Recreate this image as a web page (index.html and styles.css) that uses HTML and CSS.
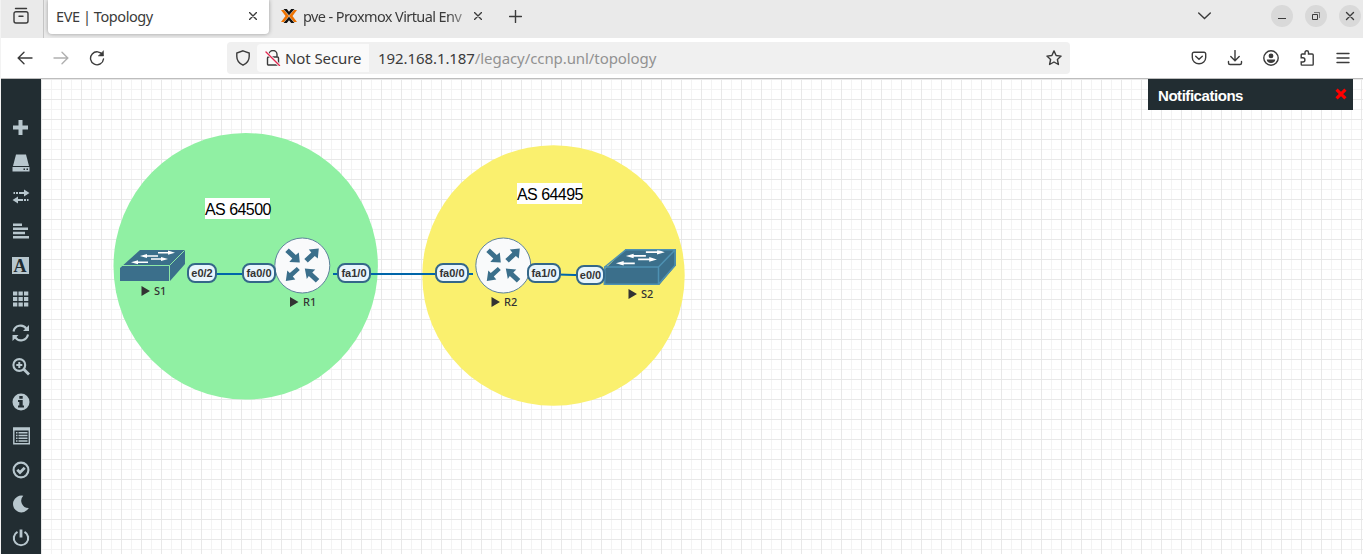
FILE: index.html
```html
<!DOCTYPE html>
<html lang="en">
<head>
<meta charset="utf-8">
<title>EVE | Topology</title>
<link rel="stylesheet" href="styles.css">
</head>
<body>
<div class="window">
  <header class="tabbar">
    <div class="recent"><svg class="ico" width="18" height="18" viewBox="0 0 18 18"><path d="M3.5 1.5h11M4 4.700h10a2 2 0 0 1 2 2v7.300a2 2 0 0 1-2 2h-10a2 2 0 0 1-2-2v-7.300a2 2 0 0 1 2-2zM7 9.300h4"/></svg></div>
    <div class="tab active"><span class="tab-title t-eve">EVE | Topology</span><svg class="ico" width="8" height="8" viewBox="0 0 8 8"><path d="M.5.5l7 7M7.500.5l-7 7"/></svg></div>
    <div class="tab second">
      <svg width="16" height="14" viewBox="0 0 16 14"><path d="M0 1h3l5 6-5 6H0l4.500-6zM16 1h-3L8 7l5 6h3l-4.500-6z" fill="#ee7200"/><path d="M2.500 0h3.300L8 2.700 10.200 0h3.300L8 6.200zM2.500 14h3.300L8 11.300l2.200 2.700h3.300L8 7.800z" fill="#111"/></svg>
      <span class="tab-title t-pve">pve - Proxmox Virtual Env</span><svg class="ico" width="8" height="8" viewBox="0 0 8 8"><path d="M.5.5l7 7M7.500.5l-7 7"/></svg>
    </div>
    <svg class="ico plus" width="13" height="13" viewBox="0 0 13 13"><path d="M6.500.5v12M.5 6.500h12"/></svg>
    <svg class="ico chevron" width="13" height="8" viewBox="0 0 13 8"><path d="M.7 1l5.800 5.500L12.300 1"/></svg>
    <div class="winbtns">
      <span class="winbtn"><svg class="ico thin" width="22" height="22" viewBox="0 0 22 22"><path d="M7 13.500h8"/></svg></span>
      <span class="winbtn"><svg class="ico thin" width="22" height="22" viewBox="0 0 22 22"><path d="M7.500 9.500h5v5h-5z"/><path d="M9 7.500h5.500V13" opacity=".6"/></svg></span>
      <span class="winbtn"><svg class="ico" width="22" height="22" viewBox="0 0 22 22"><path d="M7.500 7.500l7 7M14.500 7.500l-7 7"/></svg></span>
    </div>
  </header>

  <div class="toolbar">
    <svg class="ico back" width="16" height="14" viewBox="0 0 16 14"><path d="M15 7H1.500M7 1.200L1.200 7 7 12.800"/></svg>
    <svg class="ico fwd" width="16" height="14" viewBox="0 0 16 14"><path d="M1 7h13.500M9 1.200L14.800 7 9 12.800"/></svg>
    <svg class="ico reload" width="16" height="16" viewBox="0 0 16 16"><path d="M13.700 5.100A6.500 6.500 0 1 0 14.500 9"/><path d="M14.500 1v5H9.500z" fill="#3b3b3b" stroke-width=".5"/></svg>
    <div class="urlbar">
      <svg class="ico shield" width="16" height="16" viewBox="0 0 16 16"><path d="M8 .8L14.200 3v3.500c0 4-2.200 6.800-6.200 8.700C4 13.300 1.800 10.500 1.800 6.500V3z"/></svg>
      <div class="identity"><svg class="ico" width="16" height="16" viewBox="0 0 16 16"><path d="M4 7V4.500a4 4 0 0 1 8 0V7M3.500 7h9a1 1 0 0 1 1 1v6a1 1 0 0 1-1 1h-9a1 1 0 0 1-1-1V8a1 1 0 0 1 1-1z"/><path d="M1 2l13.500 13.500" stroke="#fafafa" stroke-width="3"/><path d="M1 2l13.500 13.500" stroke="#e22850" stroke-width="1.400"/></svg><span class="t-sec">Not Secure</span></div>
      <span class="url">192.168.1.187<span class="path">/legacy/ccnp.unl/topology</span></span>
      <svg class="ico star" width="16" height="16" viewBox="0 0 16 16"><path d="M8 .9l2.100 4.600 5 .6-3.700 3.400 1 5L8 12l-4.400 2.500 1-5L.9 6.100l5-.6z" stroke-linejoin="round"/></svg>
    </div>
    <div class="actions">
      <svg class="ico" width="16" height="16" viewBox="0 0 16 16"><path d="M3 2.200h10a1.700 1.700 0 0 1 1.700 1.700V7.500a6.700 6.300 0 0 1-13.400 0V3.900A1.700 1.700 0 0 1 3 2.200zM4.700 6.200L8 9.300l3.300-3.100"/></svg>
      <svg class="ico" width="16" height="16" viewBox="0 0 16 16"><path d="M8 .5v10M3.800 6.500L8 10.700l4.200-4.200M1.500 11.500v1.500a1.500 1.500 0 0 0 1.500 1.500h10a1.500 1.500 0 0 0 1.500-1.500v-1.500"/></svg>
      <svg class="ico" width="16" height="16" viewBox="0 0 16 16"><circle cx="8" cy="8" r="7.200"/><circle cx="8" cy="5.900" r="2.400" fill="#3b3b3b" stroke="none"/><path d="M3.800 9.500h8.400c0 2.200-1.700 3.600-4.200 3.600S3.800 11.700 3.800 9.500z" fill="#3b3b3b" stroke="none"/></svg>
      <svg class="ico" width="16" height="16" viewBox="0 0 16 16"><path d="M2.200 7.800V5a1 1 0 0 1 1-1H6V2.500a1.700 1.700 0 0 1 3.500 0V4h3.700a1 1 0 0 1 1 1v9.300a.8.800 0 0 1-.8.8H3a.8.800 0 0 1-.8-.8V12h1.600a2.100 2.100 0 0 0 0-4.200z"/></svg>
      <svg class="ico" width="16" height="16" viewBox="0 0 16 16"><path d="M2 3.500h12M2 8h12M2 12.500h12"/></svg>
    </div>
  </div>

  <div class="page">
    <nav class="sidebar">
      <span class="item"><svg viewBox="0 0 18 18"><path d="M6.500 1h4v5.500H16v4h-5.500V16h-4v-5.500H1v-4h5.500z"/></svg></span>
      <span class="item"><svg viewBox="0 0 18 18"><path d="M4 .5h10L17 12H1z"/><path d="M.5 13h17v4.500H.5z"/><path d="M11.500 14.500h1.500v1.500h-1.500zM14.500 14.500H16v1.500h-1.500z" class="cut"/></svg></span>
      <span class="item"><svg viewBox="0 0 18 18"><path d="M1.500 4H3v2H1.500zM4 4h2v2H4zM7 4h5V1.500L17.500 5 12 8.500V6H7zM16.500 11H15v2h1.500zM14 11h-2v2h2zM11 11H6V8.500L.5 12 6 15.500V13h5z"/></svg></span>
      <span class="item"><svg viewBox="0 0 18 18"><path d="M1 1.500h9V4H1zM1 5.500h15V8H1zM1 9.700h12v2.500H1zM1 14h16v2.500H1z"/></svg></span>
      <span class="item"><span class="letter">A</span></span>
      <span class="item"><svg viewBox="0 0 18 18"><path d="M1 1.500h4.300v4H1zm5.500 0h4.300v4H6.500zm5.500 0h4.300v4H12zM1 7h4.300v4H1zm5.500 0h4.300v4H6.500zM12 7h4.300v4H12zM1 12.500h4.300v4H1zm5.500 0h4.300v4H6.500zm5.500 0h4.300v4H12z"/></svg></span>
      <span class="item"><svg viewBox="0 0 18 18"><path d="M1.500 7.500a7.200 7.200 0 0 1 13-2.700M16 10.500a7.200 7.200 0 0 1-13 2.700" class="line"/><path d="M17 1v6H11zM.5 17v-6h6z"/></svg></span>
      <span class="item"><svg viewBox="0 0 18 18"><circle cx="7.300" cy="7" r="5.900" class="line"/><path d="M11.500 11l5.500 5.500" class="line heavy"/><path d="M6.300 4h2v2h2v2h-2v2h-2V8h-2V6h2z"/></svg></span>
      <span class="item"><svg viewBox="0 0 18 18"><circle cx="9" cy="9" r="8.500"/><path d="M7.300 3h3.400v2.800H7.300zM6 7h4.700v5.500H12v2H6v-2h1.300V9H6z" class="cut"/></svg></span>
      <span class="item"><svg viewBox="0 0 18 18"><path d="M1.800 1.300h15.500v15.400H1.800z" class="line slim"/><path d="M1 .6h17v3H1zM4 5h1.500v1.500H4zM6.500 5h9v1.500h-9zM4 7.800h1.500v1.400H4zM6.500 7.800h9v1.400h-9zM4 10.500h1.500V12H4zM6.500 10.500h9V12h-9zM4 13.200h1.500v1.500H4zM6.500 13.200h9v1.500h-9z"/></svg></span>
      <span class="item"><svg viewBox="0 0 18 18"><circle cx="9" cy="9" r="7.400" class="line"/><path d="M5.300 8.800L8 11.500l4.700-4.700" class="line heavy"/></svg></span>
      <span class="item"><svg viewBox="0 0 18 18"><path d="M11.300.8A7.200 7.200 0 0 0 16.800 13 8.400 8.400 0 1 1 11.300.8z"/></svg></span>
      <span class="item"><svg viewBox="0 0 18 18"><path d="M5.500 2.800a7.200 7.200 0 1 0 7 0" class="line"/><path d="M9 .5V8.500" class="line heavy"/></svg></span>
    </nav>

    <main class="canvas">
      <svg class="drawing" width="1322" height="475" viewBox="41 79 1322 475">
        <defs>
          <g id="router"><circle r="27.500" fill="#f9fafb" stroke="#5d829b"/>
            <g fill="#3b6f8b"><path d="M-17-13.500L-13.500-17-6.500-10.500-3.500-13-2.500-3-13-3.500-10-7z"/><path d="M2-6.500L9-13 6.500-16 16.500-17 15.500-7 12.500-9.500 5.500-3z"/><path d="M-2.500 4.500L-9.500 11-7 14-16.500 15.500-15 5-12.500 7.500-5.500 1.500z"/><path d="M17 13.500L13.500 17 6.500 10.500 4.500 13.500 2.500 3 13 4 10 7z"/></g></g>
          <g id="switch"><path d="M0 18L20 0H65V14L50 31H0z" fill="#3b6f8b"/>
            <g fill="none" stroke="#fff" stroke-width="1.500"><path d="M38 2.700h12M25 6h13M31 9h13M15 12.300h13"/></g>
            <path d="M48 .5l7 2.200-7 2zM27 4l-7 2 7 2zM41 7l7 2-7 2zM18 10.300l-7 2 7 2z" fill="#fff"/></g>
        </defs>
        <ellipse cx="245.700" cy="266.300" rx="132.200" ry="133.300" fill="#90f0a3"/>
        <ellipse cx="553.500" cy="275.500" rx="131.200" ry="130.300" fill="#faf06e"/>
        <g stroke="#0066aa" stroke-width="2"><path d="M200 274h62M333 274h140M541 274l50 1.500"/></g>
        <use href="#router" x="302.300" y="265.500"/>
        <use href="#router" x="503.300" y="265.500"/>
        <use href="#switch" x="120" y="250"/>
        <path d="M120.500 265.500H169.500L184.500 250.500M169.500 265.500V281" fill="none" stroke="#8de7a5" stroke-width="1"/>
        <g transform="translate(603.700 249) scale(1.110 1.160)"><use href="#switch"/></g>
        <path d="M604.700 267L626 249.700H675V265.500L658.500 284.300H604.700V267H658.500L675 250M658.500 267v17" fill="none" stroke="#4e91b2" stroke-width="1.500"/>
        <g fill="#333"><path d="M141.500 286l8.500 5-8.500 5zM290 297l8.500 5-8.500 5zM491.500 297l8.500 5-8.500 5zM628.500 289l8.500 5-8.500 5z"/></g>
      </svg>
      <span class="as as-left">AS 64500</span>
      <span class="as as-right">AS 64495</span>
      <span class="port p1">e0/2</span>
      <span class="port wide p2">fa0/0</span>
      <span class="port wide p3">fa1/0</span>
      <span class="port wide p4">fa0/0</span>
      <span class="port wide p5">fa1/0</span>
      <span class="port p6">e0/0</span>
      <span class="name n1">S1</span>
      <span class="name n2">R1</span>
      <span class="name n3">R2</span>
      <span class="name n4">S2</span>
      <div class="notice"><span>Notifications</span><svg width="12" height="12" viewBox="0 0 10 10"><path d="M1.300 1.300l7.400 7.400M8.700 1.300L1.300 8.700" stroke="#f00" stroke-width="2.600"/></svg></div>
    </main>
  </div>
</div>
</body>
</html>
```
FILE: styles.css
```css
* { box-sizing: border-box; }
body { margin: 0; overflow: hidden; font-family: "Noto Sans", "Open Sans", sans-serif; color: #3b3b3b; }
svg { display: block; flex: none; }
.window { width: 1363px; height: 554px; display: flex; flex-direction: column; border-left: 1px solid #f3f3f3; }
.ico { fill: none; stroke: #3b3b3b; stroke-width: 1.4; stroke-linecap: round; }
.thin { stroke-width: 1; stroke-linecap: butt; }

.tabbar { height: 38px; flex: none; background: #eaeaea; display: flex; align-items: flex-start; }
.recent { width: 43px; height: 38px; border-right: 1px solid #c6c6c6; padding: 7px 0 0 11px; }
.tab { display: flex; align-items: center; height: 34px; font-size: 14.5px; white-space: nowrap; }
.active { width: 221px; margin-left: 4px; padding: 0 12px 2px 8px; background: #fff; border-radius: 0 0 4px 4px; box-shadow: 0 0 4px #999; justify-content: space-between; }
.t-eve { letter-spacing: -.42px; }
.second { width: 217px; padding: 0 4px 2px 12px; }
.t-pve { width: 170px; margin: 0 2px 0 6px; letter-spacing: -.6px; mask-image: linear-gradient(90deg, #000 86%, rgba(0,0,0,.15)); }
.plus { margin: 10px 0 0 23px; }
.chevron { margin: 12px 0 0 676px; }
.winbtns { display: flex; gap: 12px; margin: 5px 0 0 60px; }
.winbtn { width: 22px; height: 22px; border-radius: 50%; background: #d9d9d9; }

.toolbar { height: 41px; flex: none; display: flex; align-items: center; background: #fff; border-bottom: 1px solid #bdbdbd; padding-left: 16px; }
.fwd { margin-left: 20px; stroke: #b0b0b0; }
.reload { margin-left: 20px; }
.urlbar { width: 843px; height: 32px; margin-left: 122px; background: #f0f0f0; border-radius: 4px; display: flex; align-items: center; font-size: 15px; }
.shield { margin-left: 8px; }
.identity { width: 112px; height: 28px; margin-left: 6px; padding-left: 8px; background: #fafafa; border-radius: 4px 0 0 4px; display: flex; align-items: center; gap: 4px; white-space: nowrap; }
.identity, .url { line-height: 20px; }
.t-sec { letter-spacing: -.1px; }
.t-sec, .url { padding-bottom: 1px; }
.url { margin-left: 9px; white-space: nowrap; letter-spacing: -.08px; }
.path { color: #929292; }
.star { margin: 0 8px 0 auto; }
.actions { display: flex; gap: 20px; margin-left: 121px; }

.page { flex: 1; display: flex; min-height: 0; }
.sidebar { width: 40px; flex: none; background: #222d32; display: flex; flex-direction: column; padding-top: 32.4px; }
.item { height: 34.15px; flex: none; display: flex; align-items: center; padding-left: 10.5px; }
.item svg { width: 18px; height: 18px; fill: #b8c7ce; }
.item .cut { fill: #222d32; }
.item .line { fill: none; stroke: #b8c7ce; stroke-width: 2.1; }
.item .heavy { stroke-width: 2.8; }
.item .slim { stroke-width: 1.4; }
.letter { width: 17px; height: 17px; background: #b8c7ce; color: #222d32; font: bold 18px/18px "Liberation Serif", serif; text-align: center; }

.canvas { flex: 1; position: relative; overflow: hidden; background-color: #fff;
  background-image:
    linear-gradient(90deg, #e8e8e8 1px, transparent 1px),
    linear-gradient(#e8e8e8 1px, transparent 1px),
    linear-gradient(90deg, #f3f3f3 1px, transparent 1px),
    linear-gradient(#f3f3f3 1px, transparent 1px);
  background-size: 20px 20px, 20px 20px, 10px 10px, 10px 10px; }
.drawing { position: absolute; inset: 0; }
.as, .port, .name { position: absolute; white-space: nowrap; }
.as { height: 21px; width: 65px; background: #fff; color: #000; font: 16px/23px "Liberation Sans", Arial, sans-serif; letter-spacing: -.55px; }
.as-left { left: 164px; top: 119px; }
.as-right { left: 476px; top: 104px; }
.port { width: 30px; height: 20px; border: 2px solid #346789; border-radius: 8px; background: #e9f5fd; color: #333; font: bold 11px/16px "Liberation Sans", Arial, sans-serif; text-align: center; }
.wide { width: 34px; }
.p1 { left: 146px; top: 184px; }
.p2 { left: 201px; top: 184px; }
.p3 { left: 296px; top: 184px; }
.p4 { left: 394px; top: 184px; }
.p5 { left: 486px; top: 184px; }
.p6 { left: 535px; top: 186px; width: 29px; }
.name { font-size: 11px; font-weight: 500; line-height: 14px; color: #333; }
.n1 { left: 113px; top: 205px; }
.n2 { left: 262px; top: 216px; }
.n3 { left: 463px; top: 216px; }
.n4 { left: 600px; top: 208px; }
.notice { position: absolute; left: 1107px; top: 0; width: 205px; height: 31px; background: #222d32; color: #fff; display: flex; justify-content: space-between; padding: 8px 6px 0 10px; font: bold 15px/18px "Liberation Sans", Arial, sans-serif; letter-spacing: -.45px; }
.notice svg { margin-top: 1px; }
```
